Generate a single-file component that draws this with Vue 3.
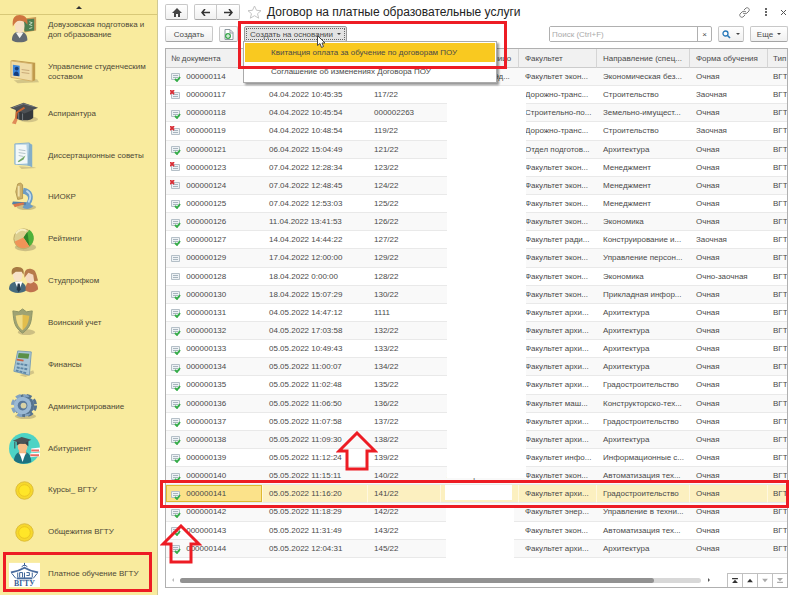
<template>
    <div class="app">
        <aside class="sidebar">
            <button class="scroll-up" aria-label="Прокрутить вверх"><span class="tri-up"></span></button>
            <nav class="section-list">
                <a v-for="item in sections" :key="item.icon + item.label" href="#" class="section-item">
                    <svg class="section-icon" viewBox="0 0 32 32" aria-hidden="true">
                        <g v-if="item.icon === 'teacher'">
                            <path d="M14 5l14-2v14l-12 2z" fill="#c79a58" />
                            <path d="M15 6l11-1v12l-10 1z" fill="#4d7d50" />
                            <path d="M21 8l3 1-3 2 3 1M21 15l3-1" stroke="#c4dcc0" fill="none" />
                            <path d="M3 27c0-6 3-9 8-9s8 3 8 9c-4 3-12 3-16 0z" fill="#636a72" />
                            <path d="M7 19l4 6 4-6z" fill="#f4f4f0" />
                            <ellipse cx="11" cy="12" rx="5" ry="8" fill="#f6dfc4" />
                            <path d="M4 13C3 4 6 1 11 1s9 3 8 10c-2-3-5-4-8-4s-5 2-7 6z" fill="#cf7540" />
                        </g>
                        <g v-else-if="item.icon === 'card'">
                            <path d="M5 25l24-1 2 3-22 1z" fill="#b9ac78" opacity=".6" />
                            <path d="M2 5l2-1 23 3v18l-3 1z" fill="#c09a4c" />
                            <path d="M2 5l22 3v18L2 22z" fill="#f0dca6" stroke="#d3b269" />
                            <path d="M4 9l7 1v11l-7-1z" fill="#3b86dc" />
                            <circle cx="8" cy="13" r="2" fill="#173e7c" />
                            <path d="M5 19c0-4 5-4 5 0v2l-5-1z" fill="#173e7c" />
                            <path d="M13 14l8 1M13 17l8 1" stroke="#c7a877" />
                        </g>
                        <g v-else-if="item.icon === 'cap'">
                            <ellipse cx="20" cy="22" rx="10" ry="3" fill="#b9ac78" opacity=".6" />
                            <path d="M7 12v8c3 4 16 4 18 0v-8z" fill="#34383c" />
                            <path d="M10 15v7M14 16v7" stroke="#787e84" />
                            <path d="M1 10L15 5l15 5-14 6z" fill="#4c5054" />
                            <path d="M4 10l11-4 11 3" stroke="#777c80" fill="none" />
                            <path d="M16 10l-8 5-1 8" stroke="#c96532" stroke-width="2" fill="none" />
                            <path d="M6 21l3 1-2 5-4-1z" fill="#e08a58" />
                        </g>
                        <g v-else-if="item.icon === 'paper'">
                            <path d="M10 27l16 1 2 1-15 1z" fill="#b9ac78" opacity=".6" />
                            <path d="M6 4l15-1v23L6 25z" fill="#b6d3e5" stroke="#8cb4cc" />
                            <path d="M21 3l3 2v23l-5-2z" fill="#84aec8" />
                            <path d="M7 5h11l1 19-12 1z" fill="#f3f8f8" />
                            <path d="M10 10l7 1M10 13l7 1M10 16l5 1" stroke="#b4c3c9" />
                            <path d="M9 22l8-6-2 4-5 3z" fill="#73a866" />
                        </g>
                        <g v-else-if="item.icon === 'microscope'">
                            <ellipse cx="18" cy="26" rx="10" ry="3" fill="#b9ac78" opacity=".7" />
                            <path d="M15 6c10 1 12 11 7 17l3 2c-4 4-9 3-11 1l3-4c4-4 4-9-3-10z" fill="#6c9cc4" />
                            <path d="M18 9c5 3 5 8 2 12" stroke="#bfd9ec" stroke-width="2" fill="none" />
                            <path d="M4 20l14 1-1 3-14-1z" fill="#5280a8" />
                            <path d="M4 23l11-2 1 2-10 3z" fill="#d8764a" />
                            <path d="M9 2l3-1 2 2v14l-5 1-2-8z" fill="#cdb168" stroke="#b59a54" />
                            <path d="M10 4v11" stroke="#f0e2ac" stroke-width="2" />
                        </g>
                        <g v-else-if="item.icon === 'pie'">
                            <ellipse cx="17" cy="24" rx="11" ry="4" fill="#b9ac78" opacity=".7" />
                            <circle cx="15" cy="16" r="10" fill="#b9a55c" />
                            <circle cx="15" cy="15" r="10" fill="#dccf90" stroke="#c0ad68" />
                            <path d="M15 14l6-8c7 5 5 14 0 17z" fill="#4fb23a" />
                            <path d="M15 14l4-6 2 15z" fill="#2d8428" />
                            <path d="M15 14l6 9c-6 4-14 1-15-5z" fill="#f09458" />
                            <path d="M7 10c3-4 7-5 11-3" stroke="#f5edbe" stroke-width="2" fill="none" />
                        </g>
                        <g v-else-if="item.icon === 'people'">
                            <path d="M0 24c0-6 4-8 9-8s9 3 9 9c-5 4-14 4-18-1z" fill="#466a7d" />
                            <path d="M17 25c0-7 3-9 6-9s7 2 7 8c-4 4-9 4-13 1z" fill="#bf724e" />
                            <path d="M6 16l4 10 4-10z" fill="#fff" />
                            <path d="M9 18h2l1 6-2 3-2-3z" fill="#263848" />
                            <ellipse cx="9" cy="9" rx="5" ry="7" fill="#f7e2c8" />
                            <ellipse cx="22" cy="11" rx="5" ry="7" fill="#f5dac2" />
                            <path d="M3 9C2 3 4 1 9 1s7 3 6 8l-2-3-6 0z" fill="#a77a43" />
                            <path d="M16 12c-1-7 2-10 7-9 5 1 5 5 7 12l-4 1-1-7-5-2z" fill="#b77a4b" />
                        </g>
                        <g v-else-if="item.icon === 'shield'">
                            <ellipse cx="18" cy="26" rx="9" ry="3" fill="#b9ac78" opacity=".7" />
                            <path d="M14 2l4 3 6-1c-1 13-2 17-10 23C6 21 5 17 4 4l6 1z" fill="#9fa373" stroke="#8c9466" />
                            <path d="M14 8l7 1c-1 7-2 11-7 15-5-4-6-8-7-15z" fill="#e2bd4c" />
                            <path d="M14 8v16c-5-4-6-8-7-15z" fill="#f0dc86" />
                        </g>
                        <g v-else-if="item.icon === 'calc'">
                            <path d="M11 27l14-5 1 3-9 4z" fill="#b9ac78" opacity=".6" />
                            <path d="M9 2l14 1-2 24-16-4z" fill="#a8c6d6" stroke="#7c9fb4" />
                            <path d="M10 4l11 1-1 5-11-1z" fill="#5a9048" />
                            <path d="M8 11l7 1" stroke="#cb6245" stroke-width="2" />
                            <path d="M8 15l12 2M8 19l11 2M7 22l11 3" stroke="#5d86a6" stroke-width="2" stroke-dasharray="3 1" />
                        </g>
                        <g v-else-if="item.icon === 'gear'">
                            <ellipse cx="17" cy="26" rx="11" ry="3" fill="#b9ac78" opacity=".7" />
                            <circle cx="17" cy="15" r="10" fill="none" stroke="#56738f" stroke-width="4" stroke-dasharray="5 3" />
                            <circle cx="14" cy="15" r="10" fill="none" stroke="#83a3c2" stroke-width="4" stroke-dasharray="5 3" />
                            <circle cx="17" cy="15" r="9" fill="#56738f" />
                            <circle cx="14" cy="15" r="9" fill="#9bb9d4" />
                            <circle cx="14" cy="15" r="5" fill="#57779a" />
                            <circle cx="15" cy="15" r="3" fill="#d8d2a6" />
                        </g>
                        <g v-else-if="item.icon === 'student'">
                            <circle cx="16" cy="16" r="16" fill="#4dd3c5" />
                            <path d="M5 28c1-7 5-9 9-9s9 2 9 11c-5 2-13 3-18-2z" fill="#1d7280" />
                            <path d="M11 17h6l1 4-4 5-4-5z" fill="#f2b583" />
                            <path d="M11 21l3 9 3-9z" fill="#fff" />
                            <ellipse cx="14" cy="14" rx="5" ry="6" fill="#f6bd88" />
                            <path d="M8 8h12v6l-3-3h-6l-3 2z" fill="#34444c" />
                            <path d="M4 8l9-4 10 3-8 4z" fill="#4b5356" />
                            <path d="M6 9v7" stroke="#3e4a50" />
                            <path d="M23 16l9-1v4l-9 1zM22 21l10-1v4l-10 1z" fill="#fff" />
                            <path d="M23 18h8M22 23h9" stroke="#ec6a60" stroke-width="2" />
                        </g>
                        <g v-else-if="item.icon === 'coin'">
                            <circle cx="16" cy="16" r="9" fill="#f6d82c" stroke="#dcbb3a" />
                            <circle cx="16" cy="16" r="6" fill="#ffe628" stroke="#eac420" />
                        </g>
                        <g v-else>
                            <path d="M0 4h32v25H0z" fill="#fff" />
                            <path d="M2 14c5-1 9-2 14-5 5 3 9 4 14 5" stroke="#4a6c9e" stroke-width="2" fill="none" />
                            <path d="M13 8l3-2 3 2M16 4v3" stroke="#355d94" fill="none" />
                            <path d="M3 15l4 5M29 15l-4 5M9 14v5M11 19v-5h3v5M16 14v6M18 14h3v3h-3M24 14v5" stroke="#355d94" stroke-width="1" fill="none" />
                            <path d="M8 20h16" stroke="#4a6c9e" stroke-width="2" />
                            <text x="16" y="28" class="logo-text">ВГТУ</text>
                        </g>
                    </svg>
                    <span class="section-label">{{ item.label }}</span>
                </a>
            </nav>
        </aside>

        <main class="content">
            <header class="title-bar">
                <button class="btn btn-home" aria-label="Домой">
                    <svg width="10" height="9" viewBox="0 0 10 9"><path d="M5 0l5 5H8v4H6V6H4v3H2V5H0z" fill="#444" /></svg>
                </button>
                <div class="nav-group">
                    <button class="btn nav-btn" aria-label="Назад">
                        <svg width="9" height="7" viewBox="0 0 9 7"><path d="M4 0L1 3.500l3 3.500M1 3.500h8" stroke="#333" stroke-width="1.500" fill="none" /></svg>
                    </button>
                    <button class="btn nav-btn" aria-label="Вперед">
                        <svg width="9" height="7" viewBox="0 0 9 7"><path d="M5 0l3 3.500L5 7M8 3.500H0" stroke="#333" stroke-width="1.500" fill="none" /></svg>
                    </button>
                </div>
                <svg class="star" width="15" height="14" viewBox="0 0 15 14"><path d="M7.500 1l2 4.300 4.500.4-3.500 3 1.200 4.500-4.200-2.500-4.200 2.500 1.200-4.500L1 5.700l4.500-.4z" fill="#fff" stroke="#c4c4c4" /></svg>
                <h1 class="title">Договор на платные образовательные услуги</h1>
                <div class="window-tools">
                    <button class="icon-btn" aria-label="Получить ссылку">
                        <svg width="11" height="11" viewBox="0 0 11 11"><path d="M5 3l2-2c2-1 4 1 3 3L8 6C7 7 5 7 4 6M6 8l-2 2c-2 1-4-1-3-3l2-2c1-1 3-1 4 0" stroke="#777" fill="none" /></svg>
                    </button>
                    <button class="icon-btn" aria-label="Меню">
                        <svg width="3" height="8" viewBox="0 0 3 8"><path d="M1 0h2v2H1zM1 3h2v2H1zM1 6h2v2H1z" fill="#666" /></svg>
                    </button>
                    <button class="icon-btn" aria-label="Закрыть">
                        <svg width="5" height="5" viewBox="0 0 5 5"><path d="M0 0l5 5M5 0L0 5" stroke="#555" /></svg>
                    </button>
                </div>
            </header>

            <div class="toolbar">
                <button class="btn btn-create">Создать</button>
                <button class="btn btn-copy" aria-label="Создать копированием">
                    <svg width="10" height="11" viewBox="0 0 10 11">
                        <path d="M1 .5h5l3 3v7H1z" fill="#fff" stroke="#8e9aa0" />
                        <path d="M6 1v3h3" fill="none" stroke="#8e9aa0" />
                        <circle cx="4" cy="7" r="3" fill="#39a64b" />
                        <path d="M4 5v4M2 7h4" stroke="#fff" />
                    </svg>
                </button>
                <div class="menu-holder">
                    <button class="btn btn-based" :aria-expanded="isMenuOpen" @click="toggleMenu">
                        Создать на основании <span class="caret"></span>
                    </button>
                    <div v-if="isMenuOpen" class="menu">
                        <button class="menu-item menu-item--active">Квитанция оплата за обучение по договорам ПОУ</button>
                        <button class="menu-item">Соглашение об изменениях Договора ПОУ</button>
                    </div>
                </div>
                <div class="search">
                    <input v-model="query" class="search-input" type="text" placeholder="Поиск (Ctrl+F)" aria-label="Поиск">
                    <button class="search-clear" aria-label="Очистить" @click="query = ''">×</button>
                </div>
                <button class="btn btn-find" aria-label="Найти">
                    <svg width="9" height="9" viewBox="0 0 9 9"><circle cx="3.500" cy="3.500" r="2.500" fill="#fff" stroke="#2878b8" stroke-width="1.300" /><path d="M5.500 5.500L8 8" stroke="#2878b8" stroke-width="1.600" /></svg>
                    <span class="caret"></span>
                </button>
                <button class="btn btn-more">Еще <span class="caret"></span></button>
            </div>

            <section class="grid">
                <div class="table-area">
                    <table class="doc-table">
                        <colgroup>
                            <col class="col-number"><col class="col-date"><col class="col-contract"><col class="col-person">
                            <col class="col-faculty"><col class="col-course"><col class="col-form"><col>
                        </colgroup>
                        <thead>
                            <tr>
                                <th>№ документа</th>
                                <th></th>
                                <th></th>
                                <th class="person-head">лицо</th>
                                <th>Факультет</th>
                                <th>Направление (спец...</th>
                                <th>Форма обучения</th>
                                <th>Тип</th>
                            </tr>
                        </thead>
                        <tbody>
                            <tr v-for="row in rows" :key="row[1]" :class="{ selected: row[1] === selectedNumber }" @click="selectedNumber = row[1]">
                                <td class="number-cell">
                                    <svg class="doc-icon" width="11" height="11" viewBox="0 0 11 11">
                                        <path d="M1.500 2.500h8v6h-8z" fill="#eef2f5" stroke="#b4bfc7" />
                                        <path d="M3 4.500h5M3 6.500h5" stroke="#a8b5be" />
                                        <path v-if="row[0] === 'done'" d="M5 8l2 2 3-4" stroke="#35ad48" stroke-width="1.800" fill="none" />
                                        <path v-if="row[0] === 'deleted'" d="M0 0l4 4M4 0L0 4" stroke="#d92d35" stroke-width="1.800" />
                                    </svg>
                                    {{ row[1] }}
                                </td>
                                <td>{{ row[2] }}</td>
                                <td>{{ row[3] }}</td>
                                <td :class="{ 'person-head': row[1] === '000000114' }">{{ row[7] }}</td>
                                <td>{{ row[4] }}</td>
                                <td>{{ row[5] }}</td>
                                <td>{{ row[6] }}</td>
                                <td>ВГТ</td>
                            </tr>
                        </tbody>
                    </table>
                </div>
                <footer class="grid-footer">
                    <span class="scroll-arrow scroll-arrow--left"></span>
                    <div class="scroll-track"><div class="scroll-thumb"></div></div>
                    <span class="scroll-arrow"></span>
                    <div class="pager">
                        <button class="pager-btn" aria-label="В начало"><svg width="6" height="5" viewBox="0 0 7 6"><path d="M0 0h7v1.500H0zM0 6l3.500-4L7 6z" /></svg></button>
                        <button class="pager-btn" aria-label="Вверх"><svg width="6" height="5" viewBox="0 0 7 6"><path d="M0 5l3.500-4L7 5z" /></svg></button>
                        <button class="pager-btn" aria-label="Вниз" disabled><svg width="6" height="5" viewBox="0 0 7 6"><path d="M0 1l3.500 4L7 1z" /></svg></button>
                        <button class="pager-btn" aria-label="В конец" disabled><svg width="6" height="5" viewBox="0 0 7 6"><path d="M0 4.500h7V6H0zM0 0l3.500 4L7 0z" /></svg></button>
                    </div>
                </footer>
            </section>
        </main>

        <!-- закрашенные персональные данные -->
        <div class="cover cover-top"></div>
        <div class="cover cover-row"></div>
        <div class="cover cover-bottom"></div>

        <!-- выделения поверх окна -->
        <div class="mark mark-section"></div>
        <div class="mark mark-menu"></div>
        <div class="mark mark-row"></div>
        <svg v-for="name in ['date', 'number']" :key="name" class="arrow" :class="'arrow-' + name" viewBox="0 0 42 40">
            <path d="M21 2L39 20H31V38H11V20H3z" />
        </svg>
        <svg class="cursor" viewBox="0 0 9 13"><path d="M.5.5v10l2.500-2 1.500 4 2-1L5 8h3z" fill="#fff" stroke="#444" /></svg>
    </div>
</template>

<script setup>
import { ref } from 'vue';

// Разделы левой панели
const sections = [
    { icon: 'teacher', label: 'Довузовская подготовка и доп образование' },
    { icon: 'card', label: 'Управление студенческим составом' },
    { icon: 'cap', label: 'Аспирантура' },
    { icon: 'paper', label: 'Диссертационные советы' },
    { icon: 'microscope', label: 'НИОКР' },
    { icon: 'pie', label: 'Рейтинги' },
    { icon: 'people', label: 'Студпрофком' },
    { icon: 'shield', label: 'Воинский учет' },
    { icon: 'calc', label: 'Финансы' },
    { icon: 'gear', label: 'Администрирование' },
    { icon: 'student', label: 'Абитуриент' },
    { icon: 'coin', label: 'Курсы_ ВГТУ' },
    { icon: 'coin', label: 'Общежития ВГТУ' },
    { icon: 'university', label: 'Платное обучение ВГТУ' }
];

// состояние, номер, дата, договор, факультет, направление, форма, лицо
const rows = [
    ['done', '000000114', '', '', 'Факультет экон...', 'Экономическая без...', 'Очная', 'Эд...'],
    ['deleted', '000000117', '04.04.2022 10:45:35', '117/22', 'Дорожно-транс...', 'Строительство', 'Заочная'],
    ['done', '000000118', '04.04.2022 10:45:54', '000002263', 'Строительно-по...', 'Земельно-имущест...', 'Очная'],
    ['deleted', '000000119', '04.04.2022 10:48:54', '119/22', 'Дорожно-транс...', 'Строительство', 'Заочная'],
    ['done', '000000121', '06.04.2022 15:04:49', '121/22', 'Отдел подготов...', 'Архитектура', 'Очная'],
    ['deleted', '000000123', '07.04.2022 12:28:34', '123/22', 'Факультет экон...', 'Менеджмент', 'Очная'],
    ['deleted', '000000124', '07.04.2022 12:48:45', '124/22', 'Факультет экон...', 'Менеджмент', 'Очная'],
    ['done', '000000125', '07.04.2022 12:53:03', '125/22', 'Факультет экон...', 'Менеджмент', 'Очная'],
    ['done', '000000126', '11.04.2022 13:41:53', '126/22', 'Факультет экон...', 'Экономика', 'Очная'],
    ['done', '000000127', '14.04.2022 14:44:22', '127/22', 'Факультет ради...', 'Конструирование и...', 'Заочная'],
    ['draft', '000000129', '17.04.2022 12:00:00', '129/22', 'Факультет экон...', 'Управление персон...', 'Очная'],
    ['draft', '000000128', '18.04.2022 0:00:00', '128/22', 'Факультет экон...', 'Экономика', 'Очно-заочная'],
    ['done', '000000130', '18.04.2022 15:07:29', '130/22', 'Факультет экон...', 'Прикладная инфор...', 'Очная'],
    ['done', '000000131', '04.05.2022 14:47:12', '1111', 'Факультет архи...', 'Архитектура', 'Очная'],
    ['done', '000000132', '04.05.2022 17:03:58', '132/22', 'Факультет архи...', 'Архитектура', 'Очная'],
    ['done', '000000133', '05.05.2022 10:49:43', '133/22', 'Факультет архи...', 'Архитектура', 'Очная'],
    ['done', '000000134', '05.05.2022 11:00:07', '134/22', 'Факультет архи...', 'Архитектура', 'Очная'],
    ['done', '000000135', '05.05.2022 11:02:48', '135/22', 'Факультет архи...', 'Градостроительство', 'Очная'],
    ['done', '000000136', '05.05.2022 11:06:50', '136/22', 'Факультет маш...', 'Конструкторско-тех...', 'Очная'],
    ['done', '000000137', '05.05.2022 11:07:58', '137/22', 'Факультет архи...', 'Градостроительство', 'Очная'],
    ['done', '000000138', '05.05.2022 11:09:30', '138/22', 'Факультет архи...', 'Архитектура', 'Очная'],
    ['done', '000000139', '05.05.2022 11:12:24', '139/22', 'Факультет инфо...', 'Информационные с...', 'Очная'],
    ['done', '000000140', '05.05.2022 11:15:11', '140/22', 'Факультет экон...', 'Автоматизация тех...', 'Очная', 'Жилищно-хозяй...'],
    ['done', '000000141', '05.05.2022 11:16:20', '141/22', 'Факультет архи...', 'Градостроительство', 'Очная'],
    ['done', '000000142', '05.05.2022 11:18:29', '142/22', 'Факультет энер...', 'Управление в техни...', 'Очная'],
    ['done', '000000143', '05.05.2022 11:31:49', '143/22', 'Факультет экон...', 'Автоматизация тех...', 'Очная'],
    ['done', '000000144', '05.05.2022 12:04:31', '145/22', 'Факультет архи...', 'Архитектура', 'Очная']
];

const isMenuOpen = ref(true);
const query = ref('');
const selectedNumber = ref('000000141');

const toggleMenu = () => {
    isMenuOpen.value = !isMenuOpen.value;
};
</script>

<style>
body {
    margin: 0;
    background: #fff;
}
</style>

<style scoped>
* {
    box-sizing: border-box;
}

.app {
    position: relative;
    display: flex;
    height: 100vh;
    overflow: hidden;
    font-family: "Liberation Sans", Arial, sans-serif;
    font-size: 8px;
    color: #4a4a4a;
}

button,
input {
    font: inherit;
    color: inherit;
    margin: 0;
    padding: 0;
}

/* Левая панель */
.sidebar {
    display: flex;
    flex-direction: column;
    flex: 0 0 158px;
    background: #f9eb9e;
    border-right: 1px solid #cfc894;
}

.scroll-up {
    display: flex;
    align-items: center;
    justify-content: center;
    flex: 0 0 15px;
    background: none;
    border: none;
    border-bottom: 1px solid #d8c878;
}

.tri-up {
    border: 3px solid transparent;
    border-top: 0;
    border-bottom-color: #333;
}

.section-list {
    display: flex;
    flex: 1;
    flex-direction: column;
    margin-top: -6px;
}

.section-item {
    display: flex;
    flex: 1;
    align-items: center;
    gap: 8px;
    padding: 0 8px 0 9px;
    color: #4d4937;
    text-decoration: none;
}

.section-icon {
    flex: 0 0 31px;
    height: 31px;
}

.section-label {
    line-height: 10px;
}

.logo-text {
    font: bold 8px "Liberation Serif", serif;
    text-anchor: middle;
    fill: #355d94;
}

/* Заголовок и панель команд */
.content {
    display: flex;
    flex: 1;
    flex-direction: column;
    min-width: 0;
    padding: 4px 12px 7px 7px;
}

.title-bar {
    display: flex;
    align-items: center;
    height: 16px;
}

.btn {
    display: flex;
    align-items: center;
    justify-content: center;
    height: 16px;
    background: linear-gradient(#fff, #f0f0f0);
    border: 1px solid #c8c8c8;
    border-bottom-color: #a4a4a4;
    border-radius: 2px;
    white-space: nowrap;
}

.btn-home {
    width: 23px;
    margin-right: 6px;
}

.nav-group {
    display: flex;
    margin-right: 7px;
}

.nav-btn {
    width: 23px;
}

.nav-btn:first-child {
    border-radius: 2px 0 0 2px;
}

.nav-btn:last-child {
    border-left: 0;
    border-radius: 0 2px 2px 0;
}

.star {
    margin-right: 5px;
}

.title {
    margin: 0;
    color: #222;
    font-size: 12px;
    font-weight: normal;
    white-space: nowrap;
}

.window-tools {
    display: flex;
    gap: 14px;
    margin-left: auto;
    padding-right: 2px;
}

.icon-btn {
    display: flex;
    align-items: center;
    background: none;
    border: none;
}

.toolbar {
    display: flex;
    align-items: center;
    gap: 6px;
    margin: 6px 0;
}

.btn-create {
    width: 48px;
}

.btn-copy {
    width: 19px;
}

.caret {
    border: 2px solid transparent;
    border-top-color: #444;
    border-bottom: 0;
}

.menu-holder {
    position: relative;
}

.btn-based {
    gap: 4px;
    width: 103px;
    background: #e3e3e3;
    border-color: #999;
    outline: 1px dotted #666;
    outline-offset: -3px;
}

.menu {
    position: absolute;
    top: 15px;
    left: -1px;
    z-index: 2;
    width: 254px;
    padding: 1px;
    background: #fff;
    border: 1px solid #aaa;
    box-shadow: 2px 2px 2px rgba(0, 0, 0, 0.4);
}

.menu-item {
    display: block;
    width: 100%;
    height: 19px;
    padding-left: 26px;
    background: #fff;
    border: none;
    text-align: left;
    white-space: nowrap;
}

.menu-item--active {
    background: #f9c920;
}

.search {
    display: flex;
    width: 163px;
    height: 16px;
    margin-left: auto;
    border: 1px solid #b0b0b0;
    border-radius: 2px;
}

.search-input {
    flex: 1;
    min-width: 0;
    padding-left: 2px;
    border: none;
    outline: none;
}

.search-input::placeholder {
    color: #aaa;
    opacity: 1;
}

.search-clear {
    width: 14px;
    background: none;
    border: none;
    border-left: 1px solid #b0b0b0;
}

.btn-find {
    gap: 5px;
    width: 26px;
}

.btn-more {
    gap: 4px;
    width: 38px;
}

/* Таблица договоров */
.grid {
    display: flex;
    flex: 1;
    flex-direction: column;
    min-height: 0;
    border: 1px solid #b0b0b0;
}

.table-area {
    flex: 1;
    min-height: 0;
    padding-bottom: 15px;
    overflow: hidden;
}

.doc-table {
    width: 100%;
    height: 100%;
    table-layout: fixed;
    border-collapse: separate;
    border-spacing: 0;
}

.col-number {
    width: 97px;
}

.col-date {
    width: 105px;
}

.col-contract {
    width: 73px;
}

.col-person,
.col-faculty,
.col-form {
    width: 78px;
}

.col-course {
    width: 93px;
}

th,
td {
    height: 18px;
    padding: 1px 0 0 6px;
    overflow: hidden;
    line-height: 10px;
    text-align: left;
    white-space: nowrap;
}

th {
    height: 19px;
    background: #f1f1f1;
    border-right: 1px solid #d5d5d5;
    border-bottom: 1px solid #ccc;
    font-weight: normal;
}

th:first-child,
th:last-child,
td:last-child {
    padding-left: 5px;
}

th:last-child {
    border-right: 0;
}

.person-head {
    padding-left: 52px;
}

td {
    border-bottom: 1px solid #e9e9e9;
}

tbody tr:nth-child(odd) td {
    background: #f9f9f9;
}

.number-cell {
    padding-left: 4px;
}

.doc-icon {
    margin: -2px 3px -2px 0;
    vertical-align: middle;
}

tbody tr.selected td {
    background: #fcf0c0;
    border-right: 1px solid #fff8df;
}

tbody tr.selected .number-cell {
    background: #fbe28a;
    box-shadow: inset 0 0 0 1px #dfb92f;
}

.grid-footer {
    display: flex;
    align-items: center;
    height: 14px;
    padding-left: 6px;
}

.scroll-track {
    flex: 1;
    height: 5px;
    margin: 0 7px 0 6px;
    background: #d8d8d8;
    border-radius: 3px;
}

.scroll-thumb {
    width: 91%;
    height: 5px;
    background: #929292;
    border-radius: 3px;
}

.scroll-arrow {
    border: 2px solid transparent;
    border-left-color: #555;
    border-right: 0;
}

.scroll-arrow--left {
    border-right: 2px solid #bbb;
    border-left: 0;
}

.pager {
    display: flex;
    height: 14px;
    margin-left: 17px;
}

.pager-btn {
    display: flex;
    align-items: center;
    justify-content: center;
    width: 15px;
    background: #fff;
    border: 0 solid #c0c0c0;
    border-width: 1px 0 0 1px;
    fill: #333;
}

.pager-btn:disabled {
    fill: #aaa;
}

/* Закрашенные области */
.cover {
    position: absolute;
    background: #fff;
}

.cover-top {
    top: 86px;
    left: 447px;
    width: 79px;
    height: 392px;
}

.cover-row {
    top: 485px;
    left: 445px;
    width: 67px;
    height: 15px;
}

.cover-bottom {
    top: 508px;
    left: 446px;
    width: 68px;
    height: 50px;
}

/* Красные рамки и стрелки */
.mark {
    position: absolute;
    z-index: 3;
    border: 3px solid #ed1c24;
    pointer-events: none;
}

.mark-section {
    top: 552px;
    left: 3px;
    width: 149px;
    height: 40px;
}

.mark-menu {
    top: 21px;
    left: 238px;
    width: 269px;
    height: 48px;
}

.mark-row {
    top: 480px;
    left: 160px;
    width: 629px;
    height: 28px;
}

.arrow {
    position: absolute;
    z-index: 4;
    width: 42px;
    height: 40px;
    fill: none;
    stroke: #ed1c24;
    stroke-width: 3px;
    pointer-events: none;
}

.arrow-date {
    top: 431px;
    left: 336px;
}

.arrow-number {
    top: 524px;
    left: 160px;
}

.cursor {
    position: absolute;
    top: 35px;
    left: 317px;
    z-index: 5;
    width: 9px;
    height: 13px;
}
</style>
